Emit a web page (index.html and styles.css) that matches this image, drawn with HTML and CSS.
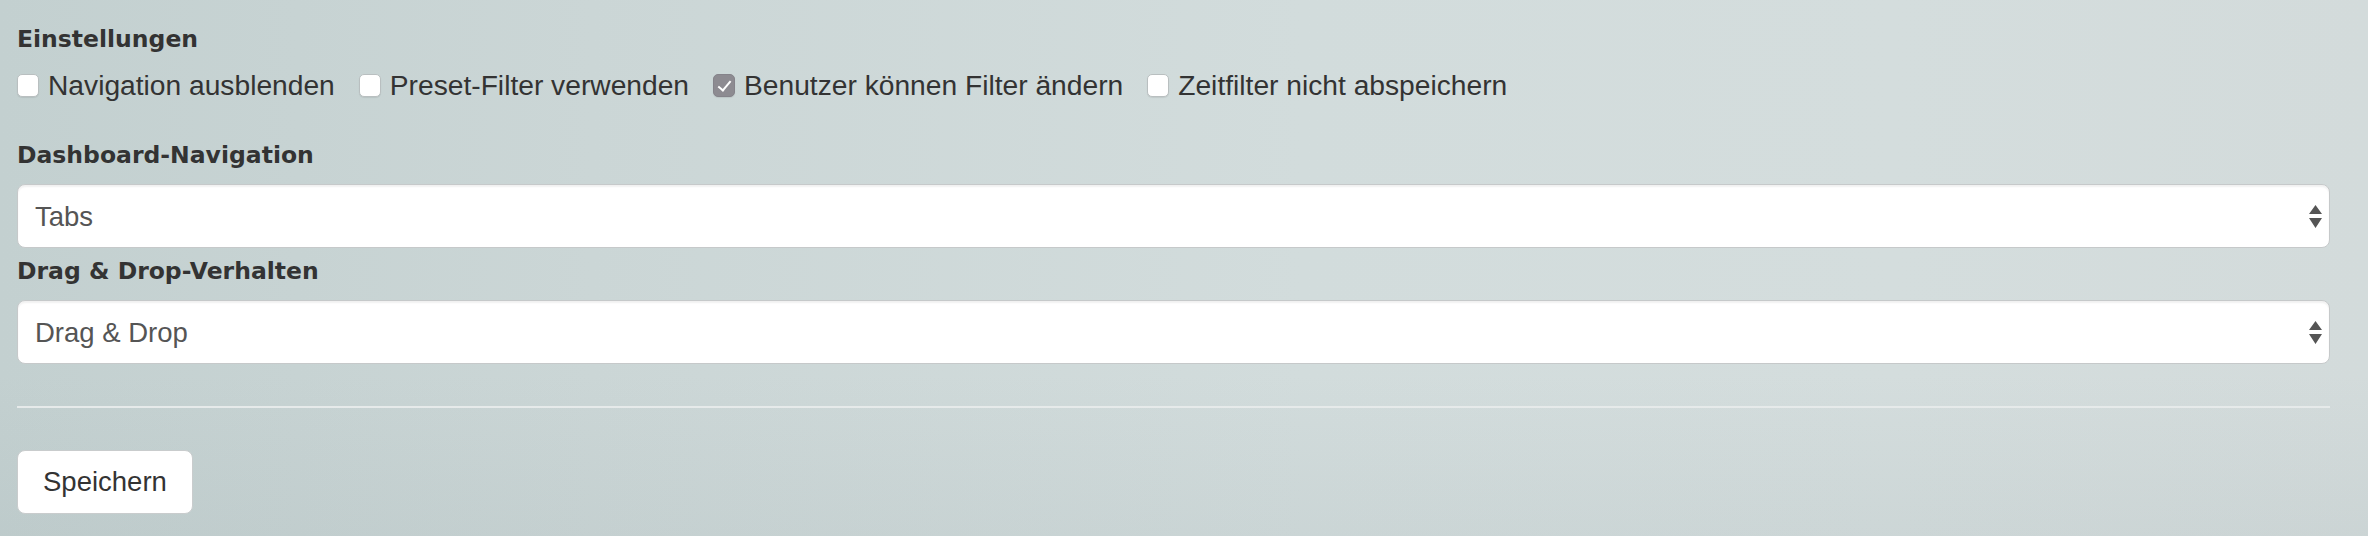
FILE: index.html
```html
<!DOCTYPE html>
<html lang="de">
<head>
<meta charset="utf-8">
<title>Einstellungen</title>
<link rel="stylesheet" href="styles.css">
</head>
<body>
<form class="page">
  <div class="group">
    <div class="group-label">Einstellungen</div>
    <div class="checks">
      <label class="check"><input type="checkbox" class="box"><span>Navigation ausblenden</span></label>
      <label class="check"><input type="checkbox" class="box"><span>Preset-Filter verwenden</span></label>
      <label class="check"><input type="checkbox" class="box" checked><span>Benutzer können Filter ändern</span></label>
      <label class="check"><input type="checkbox" class="box"><span>Zeitfilter nicht abspeichern</span></label>
    </div>
  </div>

  <div class="group group-nav">
    <label class="group-label" for="nav">Dashboard-Navigation</label>
    <div class="select-wrap">
      <select id="nav" class="select"><option>Tabs</option></select>
      <svg class="arrows" width="13" height="23" viewBox="0 0 13 23"><path d="M6.5 0 L13 9 L0 9 Z M0 13 L13 13 L6.5 23 Z" fill="#555"/></svg>
    </div>
  </div>

  <div class="group group-dnd">
    <label class="group-label" for="dnd">Drag &amp; Drop-Verhalten</label>
    <div class="select-wrap">
      <select id="dnd" class="select"><option>Drag &amp; Drop</option></select>
      <svg class="arrows" width="13" height="23" viewBox="0 0 13 23"><path d="M6.5 0 L13 9 L0 9 Z M0 13 L13 13 L6.5 23 Z" fill="#555"/></svg>
    </div>
  </div>

  <hr class="rule">

  <button type="button" class="btn">Speichern</button>
</form>
</body>
</html>
```

FILE: styles.css
```css
html, body {
  margin: 0;
  height: 536px;
  overflow: hidden;
}

body {
  background:
    linear-gradient(180deg, rgba(255,255,255,0) 70%, rgba(150,165,168,0.12) 100%),
    linear-gradient(90deg, #c3d0d0 0%, #cbd6d6 25%, #d2dcdc 55%, #d4dddd 80%, #d3dbdb 100%);
  font-family: "Liberation Sans", Arial, sans-serif;
  color: #333;
}

.page {
  display: flex;
  flex-direction: column;
  align-items: flex-start;
  padding: 24px 38px 0 17px;
}

.group {
  align-self: stretch;
  display: flex;
  flex-direction: column;
}

.group-label {
  font-family: "DejaVu Sans", "Liberation Sans", sans-serif;
  font-weight: bold;
  font-size: 23.5px;
  line-height: 30px;
  color: #333;
  margin-bottom: 14px;
}

.group-nav {
  margin-top: 38px;
}

.group-dnd {
  margin-top: 8px;
}

.checks {
  display: flex;
  align-items: center;
  gap: 24px;
  font-size: 28.2px;
  line-height: 34px;
}

.check {
  display: flex;
  align-items: center;
  gap: 9px;
}

.box {
  appearance: none;
  -webkit-appearance: none;
  margin: 0;
  width: 22px;
  height: 23px;
  border-radius: 5px;
  background: #fff;
  border: 1px solid #b9bfc0;
  box-shadow: 0 1px 1px rgba(0,0,0,0.08);
  position: relative;
}

.box:checked {
  background: #8d8b91;
  border-color: #85838a;
}

.box:checked::after {
  content: "";
  position: absolute;
  left: 7px;
  top: 3px;
  width: 5px;
  height: 11px;
  border: solid #fff;
  border-width: 0 2px 2px 0;
  transform: rotate(40deg);
}

.select-wrap {
  position: relative;
}

.select {
  appearance: none;
  -webkit-appearance: none;
  display: block;
  width: 100%;
  height: 64px;
  margin: 0;
  padding: 0 40px 0 17px;
  background: #fff;
  border: 1px solid #c6c9ca;
  border-radius: 8px;
  box-shadow: inset 0 2px 2px rgba(0,0,0,0.06);
  font-family: "Liberation Sans", Arial, sans-serif;
  font-size: 27.5px;
  color: #555;
}

.arrows {
  position: absolute;
  right: 8px;
  top: 21px;
  pointer-events: none;
}

.rule {
  align-self: stretch;
  margin: 42px 0 0 0;
  height: 2px;
  border: 0;
  background: #e6eaea;
}

.btn {
  margin-top: 42px;
  height: 64px;
  padding: 0 25px;
  background: #fff;
  border: 1px solid #c9cccd;
  border-radius: 8px;
  font-family: "Liberation Sans", Arial, sans-serif;
  font-size: 27.5px;
  color: #333;
}
```
